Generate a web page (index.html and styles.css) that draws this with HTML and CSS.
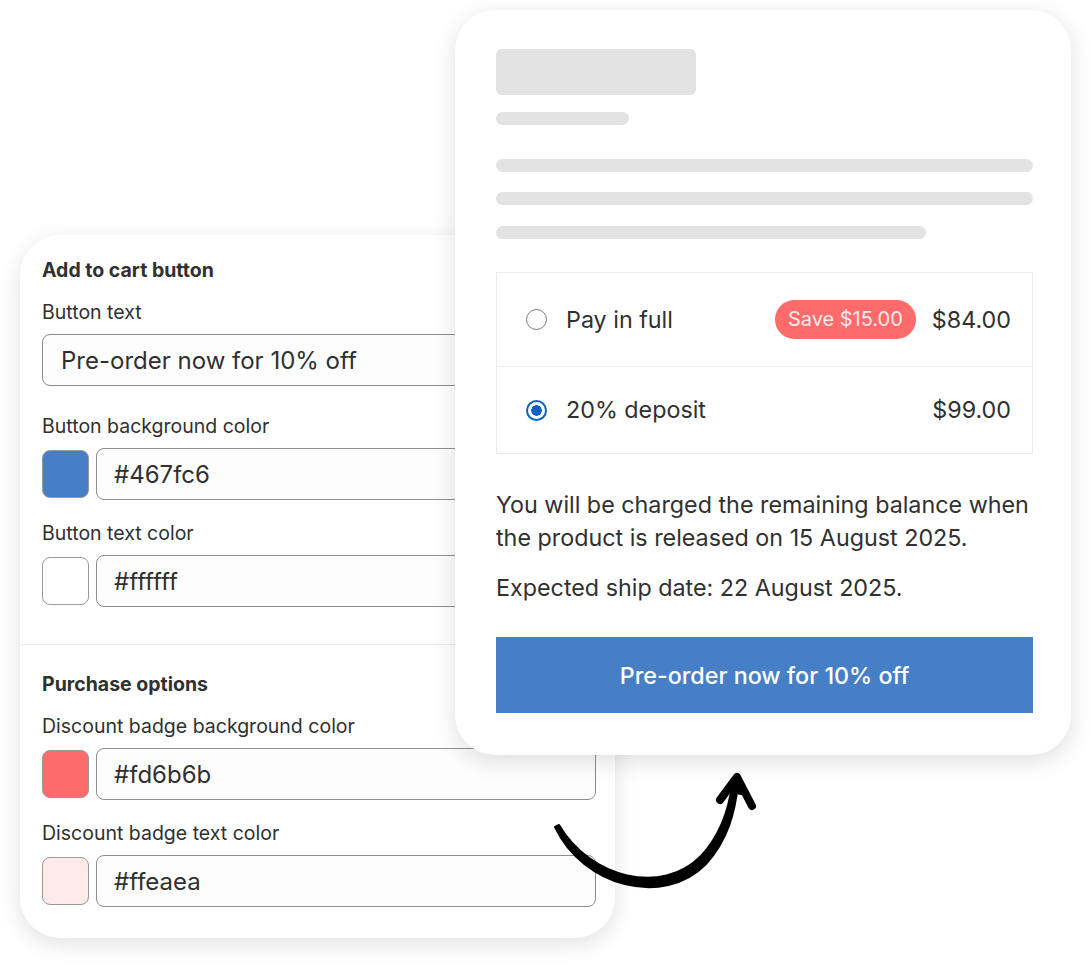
FILE: index.html
```html
<!DOCTYPE html>
<html lang="en">
<head>
<meta charset="utf-8">
<title>Pre-order settings</title>
<link rel="stylesheet" href="styles.css">
</head>
<body>
<div class="stage">
  <section class="settings">
    <div class="group group-top">
      <h2 class="group-title">Add to cart button</h2>
      <div class="field field-wide">
        <div class="field-label">Button text</div>
        <div class="text-input">Pre-order now for 10% off</div>
      </div>
      <div class="field">
        <div class="field-label">Button background color</div>
        <div class="color-row">
          <span class="swatch swatch-blue"></span>
          <div class="text-input color-input">#467fc6</div>
        </div>
      </div>
      <div class="field">
        <div class="field-label">Button text color</div>
        <div class="color-row">
          <span class="swatch swatch-white"></span>
          <div class="text-input color-input">#ffffff</div>
        </div>
      </div>
    </div>
    <div class="group group-bottom">
      <h2 class="group-title">Purchase options</h2>
      <div class="field">
        <div class="field-label">Discount badge background color</div>
        <div class="color-row">
          <span class="swatch swatch-red"></span>
          <div class="text-input color-input">#fd6b6b</div>
        </div>
      </div>
      <div class="field">
        <div class="field-label">Discount badge text color</div>
        <div class="color-row">
          <span class="swatch swatch-pink"></span>
          <div class="text-input color-input">#ffeaea</div>
        </div>
      </div>
    </div>
  </section>

  <section class="preview">
    <div class="sk sk-title"></div>
    <div class="sk sk-sub"></div>
    <div class="sk sk-line sk-line-first"></div>
    <div class="sk sk-line"></div>
    <div class="sk sk-line sk-line-short"></div>

    <div class="options">
      <div class="option">
        <span class="radio"></span>
        <span class="option-name">Pay in full</span>
        <span class="badge">Save $15.00</span>
        <span class="price">$84.00</span>
      </div>
      <div class="option">
        <span class="radio radio-on"></span>
        <span class="option-name">20% deposit</span>
        <span class="price">$99.00</span>
      </div>
    </div>

    <p class="note">You will be charged the remaining balance when the product is released on 15 August 2025.</p>
    <p class="note note-ship">Expected ship date: 22 August 2025.</p>

    <div class="cta">Pre-order now for 10% off</div>
  </section>

  <svg class="arrow" width="1091" height="968" viewBox="0 0 1091 968" aria-hidden="true">
    <path d="M555 827 C 583 886 663 908 706 864 C 728 840 735 812 738 784 L 732 784 C 729 810 721 834 701 856 C 662 896 590 878 559 825 Z" fill="#000" stroke="#000" stroke-width="2" stroke-linejoin="round"/>
    <path d="M720 800 L737 777 L752 806" fill="none" stroke="#000" stroke-width="8" stroke-linecap="round" stroke-linejoin="round"/>
    <path d="M726 792 L737 778 L746 796 Z" fill="#000"/>
  </svg>
</div>
</body>
</html>
```

FILE: styles.css
```css
* { box-sizing: border-box; }

body {
  margin: 0;
  background: #ffffff;
  font-family: Inter, "Noto Sans", sans-serif;
  color: #303030;
}

.stage {
  position: relative;
  width: 1091px;
  height: 968px;
  overflow: hidden;
}

/* ---------- settings card ---------- */
.settings {
  margin: 235px 0 0 20px;
  width: 595px;
  background: #ffffff;
  border-radius: 40px;
  box-shadow: 0 6px 22px rgba(0, 0, 0, 0.12);
  overflow: hidden;
}

.group {
  padding: 24px 19px 37px 22px;
}

.group-bottom {
  border-top: 1px solid #ebebeb;
  padding-top: 28px;
  padding-bottom: 31px;
}

.group-title {
  margin: 0;
  font-size: 19.5px;
  line-height: 22px;
  font-weight: 650;
  color: #303030;
}

.field {
  margin-top: 22px;
}

.group-title + .field {
  margin-top: 20px;
}

.field-wide + .field {
  margin-top: 29px;
}

.field-label {
  font-size: 19.5px;
  line-height: 22px;
  color: #303030;
  margin-bottom: 11px;
}

.text-input {
  height: 52px;
  border: 1px solid #8e8e8e;
  border-radius: 8px;
  background: #fdfdfd;
  display: flex;
  align-items: center;
  padding-left: 18px;
  font-size: 24px;
  color: #303030;
  white-space: nowrap;
}

.color-row {
  display: flex;
  align-items: center;
  gap: 7px;
}

.color-input {
  flex: 1;
  padding-left: 17px;
}

.swatch {
  width: 47px;
  height: 48px;
  border-radius: 8px;
  border: 1px solid #9a9a9a;
  flex: none;
}

.swatch-blue { background: #467fc6; }
.swatch-white { background: #ffffff; }
.swatch-red { background: #fd6b6b; }
.swatch-pink { background: #ffeaea; }

/* ---------- preview card ---------- */
.preview {
  position: absolute;
  left: 455px;
  top: 10px;
  width: 616px;
  height: 745px;
  padding: 39px 38px 0 41px;
  background: #ffffff;
  border-radius: 40px;
  box-shadow: 0 6px 24px rgba(0, 0, 0, 0.13);
}

.sk {
  background: #e3e3e3;
  height: 13px;
  border-radius: 7px;
}

.sk-title {
  width: 200px;
  height: 46px;
  border-radius: 6px;
}

.sk-sub {
  width: 133px;
  margin-top: 17px;
}

.sk-line {
  margin-top: 20px;
}

.sk-line-first {
  margin-top: 34px;
}

.sk-line-short {
  width: 430px;
  margin-top: 21px;
}

.options {
  margin-top: 33px;
  border: 1px solid #ececec;
}

.option {
  display: flex;
  align-items: center;
  padding: 27px 21px 27px 29px;
  min-height: 87px;
}

.option + .option {
  border-top: 1px solid #ececec;
}

.radio {
  width: 21px;
  height: 21px;
  border-radius: 50%;
  border: 1.5px solid #7a7a7a;
  flex: none;
  margin-right: 19px;
}

.radio-on {
  border: 2px solid #0b63c1;
  background: radial-gradient(circle, #0b63c1 0 5px, #ffffff 5.5px);
}

.option-name {
  font-size: 23.3px;
  line-height: 28px;
  flex: 1;
}

.badge {
  background: #fd6b6b;
  color: #ffeaea;
  font-size: 20px;
  line-height: 39px;
  height: 39px;
  padding: 0 13px;
  border-radius: 20px;
  margin-right: 16px;
}

.price {
  font-size: 23.3px;
  line-height: 28px;
}

.note {
  margin: 34px 0 0;
  font-size: 23.3px;
  line-height: 33px;
}

.note-ship {
  margin-top: 17px;
}

.cta {
  margin-top: 33px;
  height: 76px;
  background: #467fc6;
  color: #ffffff;
  font-size: 23.3px;
  font-weight: 500;
  display: flex;
  align-items: center;
  justify-content: center;
}

/* ---------- arrow ---------- */
.arrow {
  position: absolute;
  left: 0;
  top: 0;
  pointer-events: none;
}
```
